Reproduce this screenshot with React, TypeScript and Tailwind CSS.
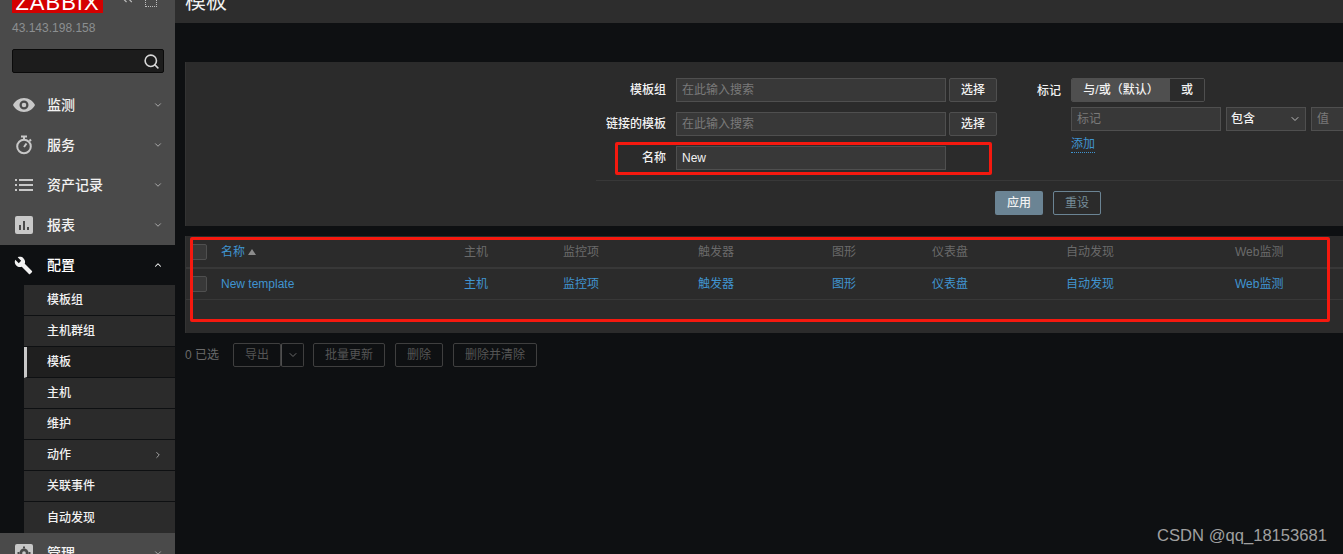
// App.tsx - Zabbix 模板 page
import { ChevronDown, ChevronRight, ChevronUp, ChevronsLeft, Search } from 'lucide-react';

const font = { fontFamily: '"Liberation Sans", Arial, "Noto Sans CJK SC", sans-serif' };

const menu = [
  { label: '监测', icon: <EyeIcon /> },
  { label: '服务', icon: <TimerIcon /> },
  { label: '资产记录', icon: <ListIcon /> },
  { label: '报表', icon: <ChartIcon /> },
];

const subMenu = ['模板组', '主机群组', '模板', '主机', '维护', '动作', '关联事件', '自动发现'];

const columns = [
  { label: '主机', width: 'w-[99px]' },
  { label: '监控项', width: 'w-[135px]' },
  { label: '触发器', width: 'w-[134px]' },
  { label: '图形', width: 'w-[100px]' },
  { label: '仪表盘', width: 'w-[134px]' },
  { label: '自动发现', width: 'w-[169px]' },
  { label: 'Web监测', width: 'w-[90px]' },
];

function EyeIcon() {
  return (
    <svg width="22" height="16" viewBox="0 0 22 16" fill="#c8c8c8">
      <path fillRule="evenodd" d="M11 1C6 1 2 4 0 8c2 4 6 7 11 7s9-3 11-7c-2-4-6-7-11-7Zm0 11.500a4.500 4.500 0 1 1 0-9 4.500 4.500 0 0 1 0 9Zm0-2.200a2.300 2.300 0 1 0 0-4.600 2.300 2.300 0 0 0 0 4.600Z" />
    </svg>
  );
}

function TimerIcon() {
  return (
    <svg width="18" height="20" viewBox="0 0 18 20" fill="none" stroke="#c8c8c8" strokeWidth="2">
      <circle cx="9" cy="11.500" r="6.800" />
      <path d="M6 1.500h6M9 2v3M9 12l2.500-3.500M14.500 4.500l1.500 1.500" />
    </svg>
  );
}

function ListIcon() {
  return (
    <svg width="18" height="12" viewBox="0 0 18 12" fill="#c8c8c8">
      <path d="M0 0h2v2H0zM4 0h14v2H4zM0 5h2v2H0zM4 5h14v2H4zM0 10h2v2H0zM4 10h14v2H4z" />
    </svg>
  );
}

function ChartIcon() {
  return (
    <svg width="18" height="18" viewBox="0 0 18 18">
      <rect width="18" height="18" rx="2" fill="#c8c8c8" />
      <path d="M4 9h2v5H4zM8 5h2v9H8zM12 11h2v3h-2z" fill="#4a4a4a" />
    </svg>
  );
}

function WrenchIcon() {
  return (
    <svg width="19" height="19" viewBox="0 0 24 24" fill="#f2f2f2">
      <path d="M22.700 19 13.600 9.900c.9-2.300.4-5-1.500-6.900-2-2-5-2.400-7.400-1.300L9 6 6 9 1.600 4.700C.4 7.100.9 10.100 2.900 12.100c1.900 1.900 4.600 2.400 6.900 1.500l9.100 9.100c.4.400 1 .4 1.400 0l2.300-2.300c.5-.4.500-1.100.1-1.400Z" />
    </svg>
  );
}

function GearIcon() {
  return (
    <svg width="18" height="18" viewBox="0 0 18 18">
      <rect width="18" height="18" rx="2" fill="#c8c8c8" />
      <circle cx="9" cy="9" r="4.500" fill="#4a4a4a" />
      <circle cx="9" cy="9" r="1.800" fill="#c8c8c8" />
      <path d="M8 2.500h2v2H8zM8 13.500h2v2H8zM2.500 8h2v2h-2zM13.500 8h2v2h-2z" fill="#4a4a4a" />
    </svg>
  );
}

function Sidebar() {
  return (
    <aside className="flex h-[554px] w-[175px] shrink-0 flex-col overflow-hidden bg-[#4a4a4a]">
      <div className="flex h-[85px] shrink-0 flex-col">
        <div className="flex h-[13px] shrink-0 items-end overflow-hidden pl-3">
          <div className="flex h-[13px] w-[91px] items-end justify-center overflow-hidden bg-[#d40000]">
            <span className="mb-[-1px] text-[22px] leading-[22px] tracking-[1px] text-white">ZABBIX</span>
          </div>
          <ChevronsLeft className="mb-[6px] ml-[15px] shrink-0 text-[#bdbdbd]" size={18} strokeWidth={1.500} />
          <span className="mb-[6px] ml-[9px] h-[12px] w-[12px] shrink-0 border border-dotted border-[#bdbdbd]" />
        </div>
        <div className="mt-[8px] pl-3 text-xs leading-[14px] text-[#8c8f91]">43.143.198.158</div>
        <div className="mx-3 mt-[14px] flex h-[24px] w-[152px] shrink-0 items-center justify-end rounded-[2px] border border-[#0a0a0a] bg-[#1c1c1c] pr-[3px]">
          <Search className="text-[#d8d8d8]" size={17} strokeWidth={2.250} />
        </div>
      </div>
      {menu.map((item) => (
        <div key={item.label} className="flex h-[40px] shrink-0 items-center">
          <span className="flex w-[47px] justify-center">
            <span className="flex w-[22px] justify-center">{item.icon}</span>
          </span>
          <span className="flex-1 text-sm font-medium text-[#f2f2f2]">{item.label}</span>
          <ChevronDown className="mr-[12px] text-[#bdbdbd]" size={10} strokeWidth={2} />
        </div>
      ))}
      <div className="flex h-[40px] shrink-0 items-center bg-[#0e1012]">
        <span className="flex w-[47px] justify-center">
          <WrenchIcon />
        </span>
        <span className="flex-1 text-sm font-medium text-white">配置</span>
        <ChevronUp className="mr-[12px] text-white" size={10} strokeWidth={2.500} />
      </div>
      <div className="shrink-0 bg-[#0e1012] pl-6">
        {subMenu.map((name) => (
          <div
            key={name}
            className={`flex h-[31px] items-center border-b border-[#0e1012] pr-[12px] text-xs font-medium text-[#f2f2f2] last:border-b-0 ${
              name === '模板' ? 'border-l-[3px] border-l-[#c8c8c8] bg-[#1f1f1f] pl-[20px]' : 'bg-[#2b2b2b] pl-[23px]'
            }`}
          >
            <span className="flex-1">{name}</span>
            {name === '动作' && <ChevronRight className="text-[#bdbdbd]" size={10} strokeWidth={2} />}
          </div>
        ))}
      </div>
      <div className="flex h-[40px] shrink-0 items-center bg-[#4a4a4a]">
        <span className="flex w-[47px] justify-center">
          <GearIcon />
        </span>
        <span className="flex-1 text-sm font-medium text-[#f2f2f2]">管理</span>
        <ChevronDown className="mr-[12px] text-[#bdbdbd]" size={10} strokeWidth={2} />
      </div>
    </aside>
  );
}

function Field({ label, value, placeholder, action }: { label: string; value?: string; placeholder?: string; action?: boolean }) {
  return (
    <div className="flex h-[24px] items-center">
      <label className="w-[81px] pr-[10px] text-right text-xs font-medium whitespace-nowrap text-[#f2f2f2]">{label}</label>
      <div className="flex h-[24px] w-[270px] items-center border border-[#4f4f4f] bg-[#383838] px-[5px] text-xs text-[#f2f2f2]">
        {value ?? <span className="text-[#7a7a7a]">{placeholder}</span>}
      </div>
      {action && (
        <button className="ml-[3px] h-[24px] w-[48px] rounded-[2px] border border-[#4f4f4f] bg-[#383838] text-xs font-medium text-[#f2f2f2]">
          选择
        </button>
      )}
    </div>
  );
}

function FilterPanel() {
  return (
    <section className="ml-[10px] h-[164px] border-l border-[#333333] bg-[#2b2b2b]">
      <div className="flex h-[118px] pt-[16px]">
        <div className="ml-[409px] flex w-[412px] flex-col gap-[10px]">
          <Field label="模板组" placeholder="在此输入搜索" action />
          <Field label="链接的模板" placeholder="在此输入搜索" action />
          <Field label="名称" value="New" />
        </div>
        <div className="flex flex-1 overflow-hidden">
          <span className="w-[64px] shrink-0 pt-[5px] pr-[10px] text-right text-xs font-medium text-[#f2f2f2]">标记</span>
          <div>
            <div className="flex h-[24px] w-[134px] overflow-hidden rounded-[2px] border border-[#4f4f4f] text-xs font-medium text-[#f2f2f2]">
              <span className="flex w-[98px] items-center justify-center bg-[#4f4f4f]">与/或（默认）</span>
              <span className="flex flex-1 items-center justify-center bg-[#2b2b2b]">或</span>
            </div>
            <div className="mt-[5px] flex w-[300px] gap-[5px] text-xs">
              <div className="flex h-[24px] w-[150px] shrink-0 items-center border border-[#4f4f4f] bg-[#383838] px-[5px] text-[#7a7a7a]">标记</div>
              <div className="flex h-[24px] w-[80px] shrink-0 items-center justify-between border border-[#4f4f4f] bg-[#383838] px-[4px] font-medium text-[#f2f2f2]">
                包含
                <ChevronDown className="text-[#bdbdbd]" size={12} />
              </div>
              <div className="flex h-[24px] w-[60px] shrink-0 items-center border border-[#4f4f4f] bg-[#383838] px-[5px] text-[#7a7a7a]">值</div>
            </div>
            <a className="mt-[6px] inline-block border-b border-dotted border-[#4094d0] text-xs leading-[15px] text-[#4094d0]">添加</a>
          </div>
        </div>
      </div>
      <div className="ml-[410px] flex h-[45px] items-center justify-start border-t border-[#383838] pl-[399px] text-xs">
        <button className="h-[24px] w-[48px] rounded-[2px] bg-[#6b8494] font-medium text-[#f2f2f2]">应用</button>
        <button className="ml-[10px] h-[24px] w-[48px] rounded-[2px] border border-[#6b8494] text-[#768d99]">重设</button>
      </div>
    </section>
  );
}

function TemplateTable() {
  return (
    <section className="mt-[10px] ml-[10px] h-[97px] border-l border-[#333333] bg-[#2b2b2b] text-xs">
      <div className="flex h-[33px] items-center border-b-2 border-[#383838]">
        <span className="ml-[5px] h-[16px] w-[16px] rounded-[2px] border border-[#4f4f4f] bg-[#383838]" />
        <span className="ml-[14px] flex w-[243px] items-center gap-[3px] text-[#4094d0]">
          名称
          <span className="h-0 w-0 border-x-[4px] border-b-[6px] border-x-transparent border-b-[#8c8c8c]" />
        </span>
        {columns.map((c) => (
          <span key={c.label} className={`${c.width} shrink-0 text-[#6a6a6a]`}>
            {c.label}
          </span>
        ))}
      </div>
      <div className="flex h-[31px] items-center border-b border-[#383838]">
        <span className="ml-[5px] h-[16px] w-[16px] rounded-[2px] border border-[#4f4f4f] bg-[#383838]" />
        <span className="ml-[14px] w-[243px] text-[#4094d0]">New template</span>
        {columns.map((c) => (
          <span key={c.label} className={`${c.width} shrink-0 text-[#4094d0]`}>
            {c.label}
          </span>
        ))}
      </div>
    </section>
  );
}

function ActionBar() {
  const btn = 'h-[24px] rounded-[2px] border border-[#3f3f3f] text-[#555555]';
  return (
    <div className="mt-[10px] ml-[10px] flex h-[24px] items-center text-xs">
      <span className="w-[48px] text-[#6a6a6a]">0 已选</span>
      <button className={`${btn} w-[48px]`}>导出</button>
      <button className={`${btn} flex w-[23px] items-center justify-center border-l-[#4f4f4f]`}>
        <ChevronDown className="text-[#6a6a6a]" size={12} />
      </button>
      <button className={`${btn} ml-[9px] w-[72px]`}>批量更新</button>
      <button className={`${btn} ml-[10px] w-[48px]`}>删除</button>
      <button className={`${btn} ml-[10px] w-[84px]`}>删除并清除</button>
    </div>
  );
}

export default function App() {
  return (
    <div className="relative flex h-[554px] w-[1343px] overflow-hidden bg-[#0e1012]" style={font}>
      <Sidebar />
      <main className="min-w-0 flex-1">
        <header className="flex h-[23px] items-end overflow-hidden bg-[#2d2d2d] pl-[10px]">
          <h1 className="mb-[10px] shrink-0 text-[21px] leading-[24px] text-[#f2f2f2]">模板</h1>
        </header>
        <div className="mt-[39px]">
          <FilterPanel />
          <TemplateTable />
          <ActionBar />
        </div>
      </main>

      {/* 截图上的红框标注和水印 */}
      <div className="absolute top-[142px] left-[615px] h-[33px] w-[377px] rounded-[2px] border-[3px] border-[#f5190f]" />
      <div className="absolute top-[237px] left-[190px] h-[85px] w-[1140px] rounded-[2px] border-[3px] border-[#f5190f]" />
      <div className="absolute top-[527px] right-[16px] text-[16.600px] leading-[18px] text-[#a0a0a0]">CSDN @qq_18153681</div>
    </div>
  );
}
